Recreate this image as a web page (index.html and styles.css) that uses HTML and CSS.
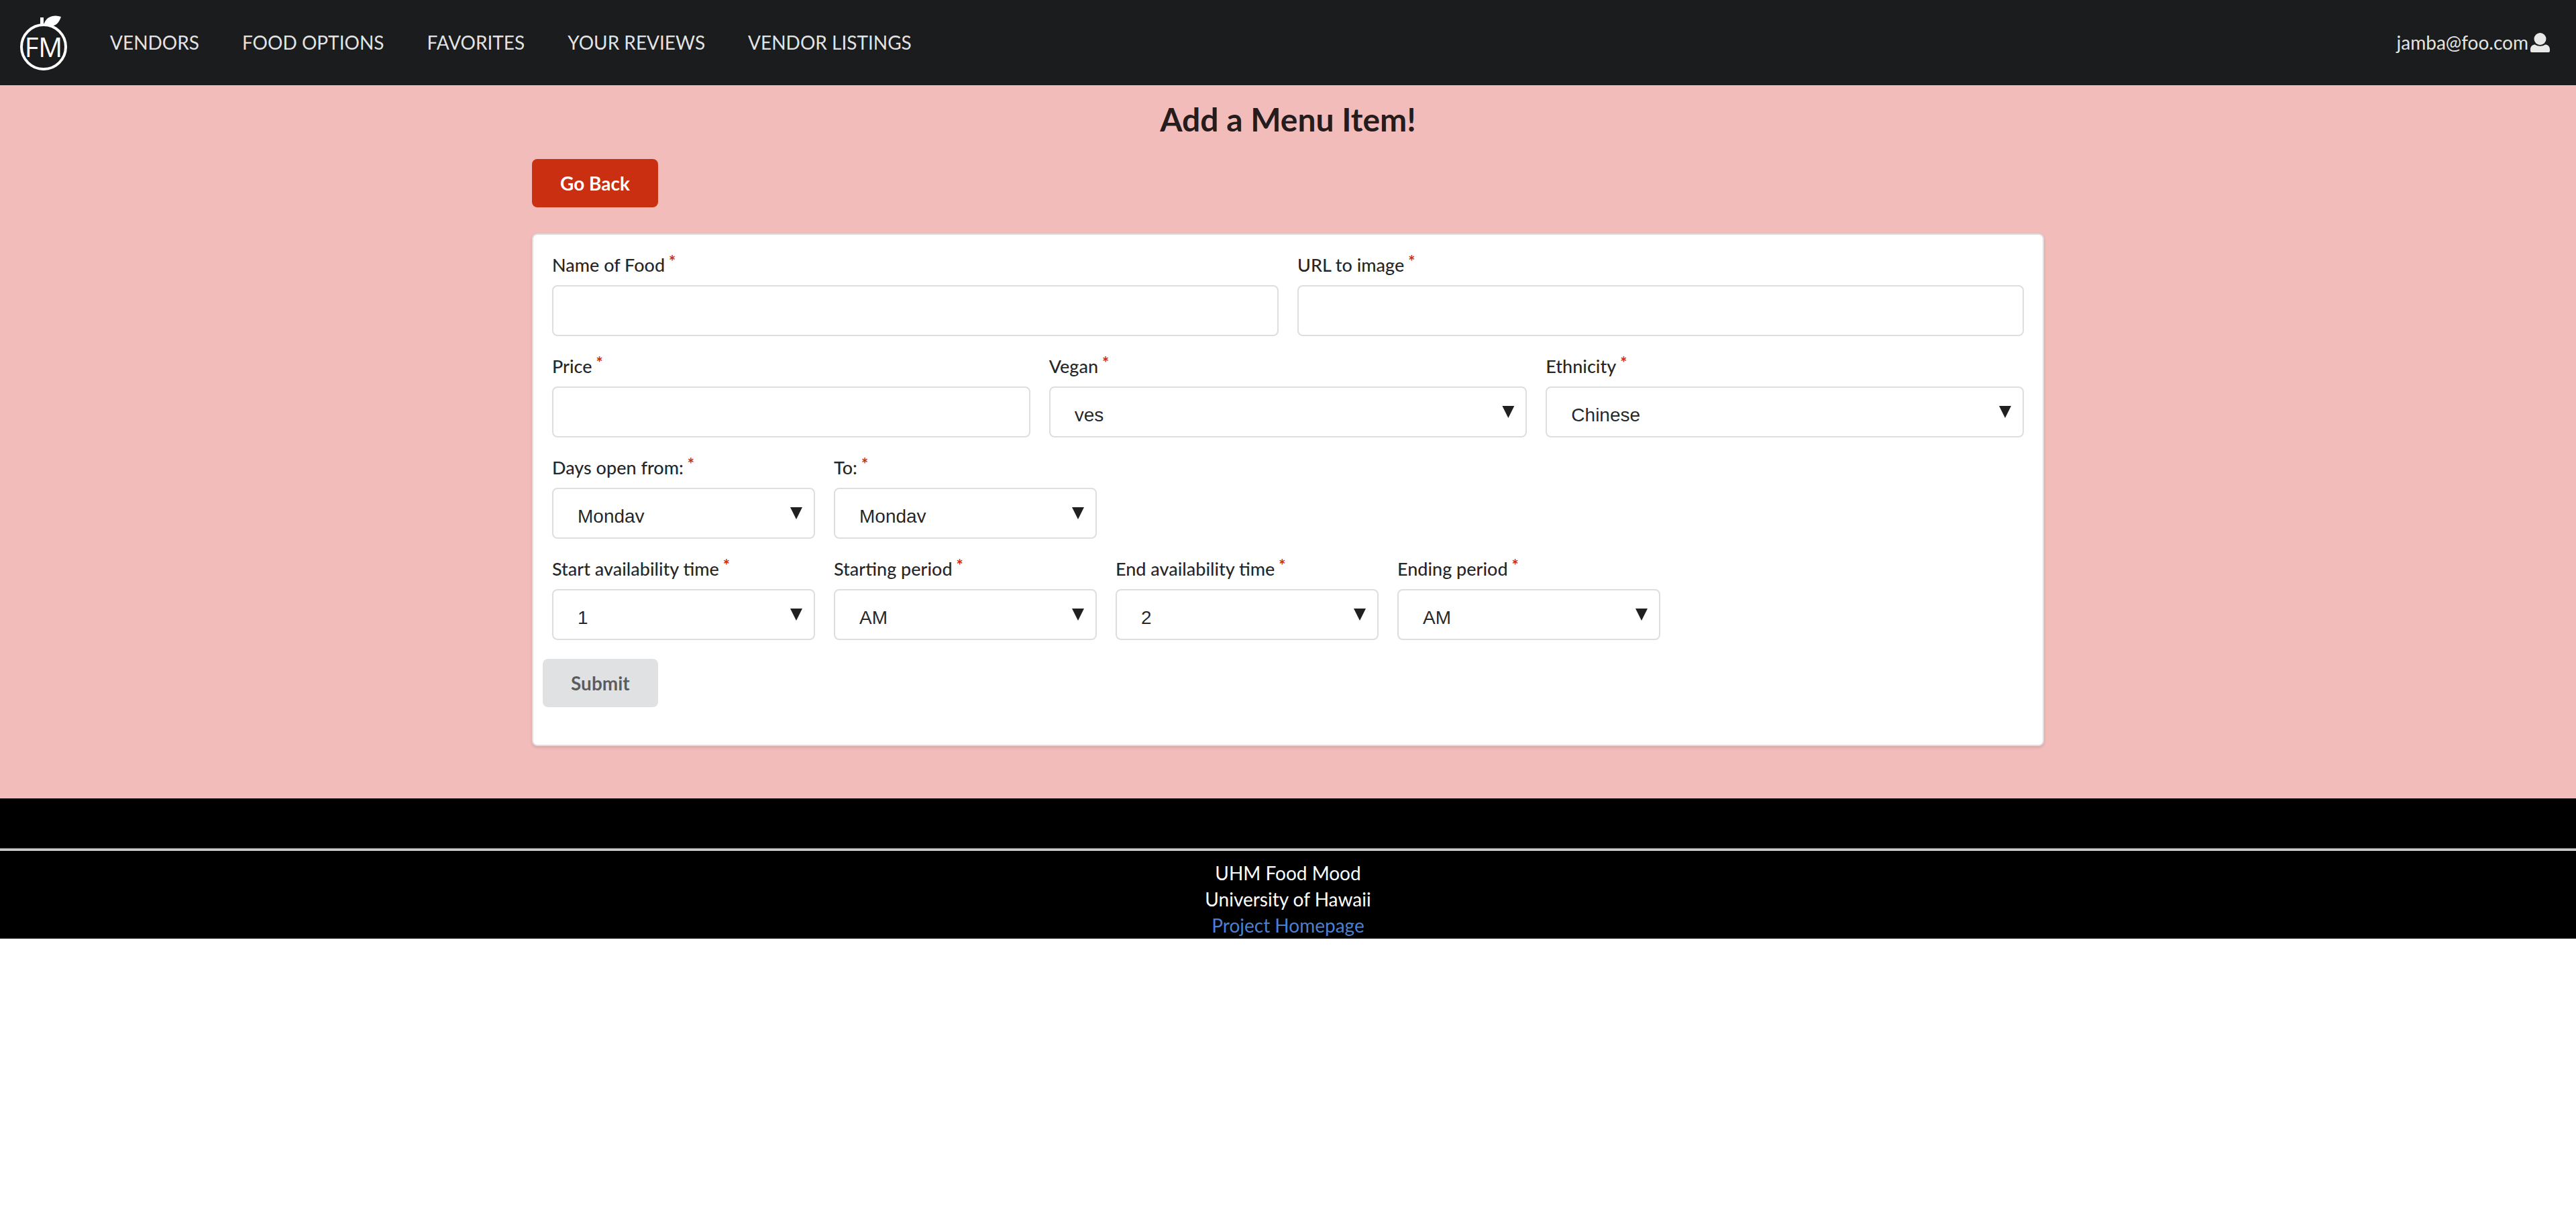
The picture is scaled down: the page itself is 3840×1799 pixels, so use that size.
FILE: index.html
```html
<!DOCTYPE html>
<html lang="en">
<head>
<meta charset="utf-8">
<meta name="viewport" content="width=device-width, initial-scale=1">
<title>UHM Food Mood</title>
<link rel="stylesheet" href="styles.css">
</head>
<body>
<header class="navbar">
  <a class="brand" href="#" aria-label="Food Mood home">
    <svg class="brand-logo" viewBox="0 0 70 82" role="img" aria-hidden="true">
      <circle cx="35" cy="47" r="33" fill="none" stroke="#fff" stroke-width="4"/>
      <path d="M30 3h5v12h-5z" fill="#fff"/>
      <path d="M35 14C38 4 45 .5 53 .5q4 0 8 1.500C58 11 53 16 45 16q-5 0-10-2z" fill="#fff"/>
      <text class="brand-text" x="35" y="62" text-anchor="middle">FM</text>
    </svg>
  </a>
  <nav class="menu" aria-label="Main">
    <a href="#">VENDORS</a>
    <a href="#">FOOD OPTIONS</a>
    <a href="#">FAVORITES</a>
    <a href="#">YOUR REVIEWS</a>
    <a href="#">VENDOR LISTINGS</a>
  </nav>
  <button class="account" type="button">
    <span>jamba@foo.com</span>
    <svg class="account-icon" viewBox="0 0 29 29" aria-hidden="true">
      <circle cx="14.500" cy="9" r="9"/>
      <path d="M0 25c0-5 3-7.500 7-7.500 4.500 3 10.500 3 15 0 4 0 7 2.500 7 7.500v2q0 2-2 2H2q-2 0-2-2z"/>
    </svg>
  </button>
</header>

<main class="page">
  <div class="container">
    <h1 class="title">Add a Menu Item!</h1>
    <button class="button button-back" type="button">Go Back</button>

    <form class="card">
      <div class="row">
        <div class="field">
          <label for="name">Name of Food</label>
          <input id="name" type="text" required>
        </div>
        <div class="field">
          <label for="image">URL to image</label>
          <input id="image" type="text" required>
        </div>
      </div>
      <div class="row">
        <div class="field">
          <label for="price">Price</label>
          <input id="price" type="text" required>
        </div>
        <div class="field">
          <label for="vegan">Vegan</label>
          <div class="select"><select id="vegan"><option>yes</option><option>no</option></select></div>
        </div>
        <div class="field">
          <label for="ethnicity">Ethnicity</label>
          <div class="select"><select id="ethnicity"><option>Chinese</option></select></div>
        </div>
      </div>
      <div class="row row-short">
        <div class="field">
          <label for="day-from">Days open from:</label>
          <div class="select"><select id="day-from"><option>Monday</option></select></div>
        </div>
        <div class="field">
          <label for="day-to">To:</label>
          <div class="select"><select id="day-to"><option>Monday</option></select></div>
        </div>
      </div>
      <div class="row row-short">
        <div class="field">
          <label for="start-time">Start availability time</label>
          <div class="select"><select id="start-time"><option>1</option></select></div>
        </div>
        <div class="field">
          <label for="start-period">Starting period</label>
          <div class="select"><select id="start-period"><option>AM</option><option>PM</option></select></div>
        </div>
        <div class="field">
          <label for="end-time">End availability time</label>
          <div class="select"><select id="end-time"><option>2</option></select></div>
        </div>
        <div class="field">
          <label for="end-period">Ending period</label>
          <div class="select"><select id="end-period"><option>AM</option><option>PM</option></select></div>
        </div>
      </div>
      <button class="button button-submit" type="submit">Submit</button>
    </form>
  </div>
</main>

<footer class="footer">
  <hr>
  <p>UHM Food Mood</p>
  <p>University of Hawaii</p>
  <p><a href="#">Project Homepage</a></p>
</footer>
</body>
</html>
```

FILE: styles.css
```css
* {
  box-sizing: border-box;
}

body {
  margin: 0;
  background: #fff;
  color: rgba(0, 0, 0, 0.87);
  font-family: Lato, "Liberation Sans", sans-serif;
  font-size: 28px;
  line-height: 39px;
}

/* Top bar */
.navbar {
  display: flex;
  align-items: center;
  min-height: 127px;
  padding: 0 39px 0 30px;
  background: #1b1c1d;
}

.brand {
  display: flex;
  margin-right: 32px;
}

.brand-logo {
  width: 70px;
  height: 82px;
}

.brand-text {
  fill: #fff;
  font-family: "Open Sans", sans-serif;
  font-size: 40px;
}

.menu {
  display: flex;
}

.menu a {
  padding: 0 32px;
  color: rgba(255, 255, 255, 0.9);
  text-decoration: none;
}

.account {
  display: flex;
  align-items: center;
  gap: 3px;
  margin-left: auto;
  padding: 0;
  border: 0;
  background: none;
  color: rgba(255, 255, 255, 0.9);
  font: inherit;
}

.account-icon {
  width: 29px;
  height: 29px;
  fill: currentColor;
}

/* Page body */
.page {
  padding: 20px 32px 78px;
  background: #f2bcba;
}

.container {
  max-width: 2254px;
  margin: 0 auto;
}

.title {
  margin: 0 0 28px;
  font-size: 48px;
  line-height: 62px;
  text-align: center;
}

.button {
  display: block;
  height: 72px;
  padding: 0 42px;
  border: 0;
  border-radius: 8px;
  font: bold 28px/28px Lato, "Liberation Sans", sans-serif;
}

.button-back {
  margin-bottom: 39px;
  background: #ca2f11;
  color: #fff;
}

.button-submit {
  margin-left: -14px;
  background: #e0e1e2;
  color: rgba(0, 0, 0, 0.6);
}

/* Form */
.card {
  padding: 28px 28px 56px;
  border: 2px solid #dededf;
  border-radius: 8px;
  background: #fff;
  box-shadow: 0 2px 4px rgba(34, 36, 38, 0.15);
}

.row {
  display: flex;
  gap: 28px;
  margin-bottom: 28px;
}

.field {
  flex: 1 1 0;
  min-width: 0;
}

.row-short .field {
  flex: 0 1 392px;
}

.field label {
  display: block;
  margin-bottom: 13px;
  font-size: 27px;
  font-weight: 500;
  line-height: 34px;
}

.field label::after {
  content: "*";
  margin-left: 6px;
  color: #ca2f11;
  vertical-align: top;
  font-size: 24px;
  font-weight: bold;
  line-height: 24px;
}

.field input,
.field select {
  display: block;
  width: 100%;
  height: 76px;
  border: 2px solid #dededf;
  border-radius: 8px;
  background: #fff;
  color: rgba(0, 0, 0, 0.87);
  font: 28px "Liberation Sans", Arial, sans-serif;
}

.field input {
  padding: 0 28px;
}

.field select {
  padding: 25px 36px 22px;
  appearance: none;
}

.select {
  display: grid;
  align-items: center;
}

.select select,
.select::after {
  grid-area: 1 / 1;
}

.select::after {
  content: "";
  justify-self: end;
  width: 18px;
  height: 18px;
  margin-right: 19px;
  background: #202020;
  clip-path: polygon(0 0, 100% 0, 50% 100%);
  pointer-events: none;
}

/* Footer */
.footer {
  padding-top: 74px;
  background: #000;
  color: #fff;
  text-align: center;
}

.footer hr {
  height: 4px;
  margin: 0 0 14px;
  border: 0;
  border-top: 2px solid #909090;
  background: #ececec;
}

.footer p {
  margin: 0;
}

.footer a {
  color: #4c7fd0;
  text-decoration: none;
}
```
